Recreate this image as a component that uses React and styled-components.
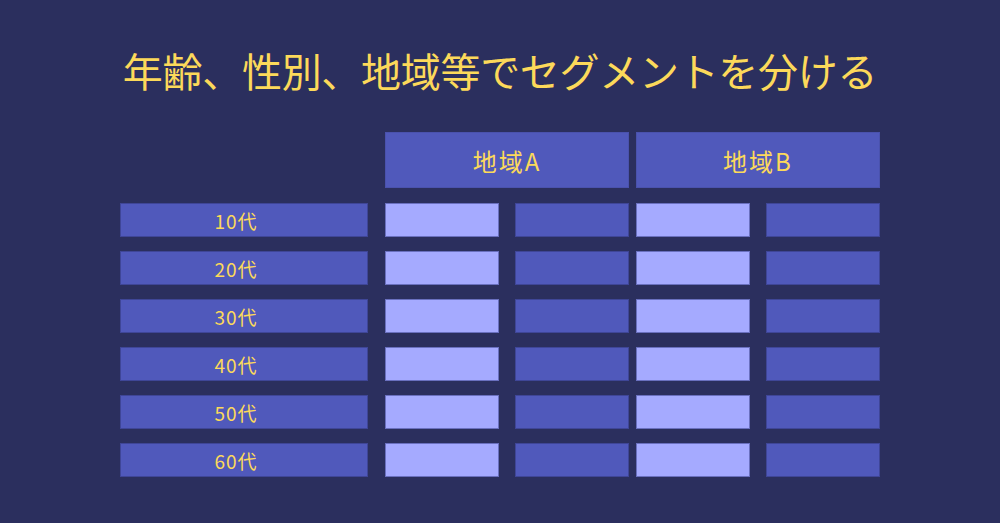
import React from 'react';
import styled, { createGlobalStyle } from 'styled-components';

const GlobalStyle = createGlobalStyle`
  html, body {
    margin: 0;
    padding: 0;
    background: #2b2f5e;
  }
  body {
    font-family: "Noto Sans CJK JP", "Noto Sans", sans-serif;
  }
`;

const ages = ['10代', '20代', '30代', '40代', '50代', '60代'];
const regions = ['地域A', '地域B'];

export default function App() {
  return (
    <>
      <GlobalStyle />
      <Page>
        <Title>年齢、性別、地域等でセグメントを分ける</Title>
        <Table>
          <Row $header>
            <Spacer />
            {regions.map(r => (
              <HeaderCell key={r}>{r}</HeaderCell>
            ))}
          </Row>
          {ages.map(age => (
            <Row key={age}>
              <Label>{age}</Label>
              {regions.map(r => (
                <Group key={r}>
                  <Cell $light />
                  <Cell />
                </Group>
              ))}
            </Row>
          ))}
        </Table>
      </Page>
    </>
  );
}

const Page = styled.div`
  width: 1000px;
  height: 523px;
  box-sizing: border-box;
  padding-top: 44px;
  display: flex;
  flex-direction: column;
  align-items: center;
  background: #2b2f5e;
`;

const Title = styled.h1`
  margin: 0;
  font-size: 40px;
  font-weight: 400;
  line-height: 52px;
  color: #fcd95a;
  letter-spacing: -0.3px;
`;

const Table = styled.div`
  margin-top: 36px;
  display: flex;
  flex-direction: column;
  gap: 14px;
`;

const Row = styled.div`
  display: flex;
  gap: 7px;
  margin-bottom: ${p => (p.$header ? '1px' : '0')};
`;

const Spacer = styled.div`
  width: 258px;
`;

const HeaderCell = styled.div`
  width: 244px;
  height: 56px;
  box-sizing: border-box;
  background: #5059bb;
  border: 1px solid #4a52ad;
  display: flex;
  align-items: center;
  justify-content: center;
  color: #fcd95a;
  font-size: 24px;
  letter-spacing: 2px;
`;

const Label = styled.div`
  width: 248px;
  height: 34px;
  margin-right: 10px;
  padding-right: 16px;
  box-sizing: border-box;
  background: #5059bb;
  border: 1px solid #3f4697;
  display: flex;
  align-items: center;
  justify-content: center;
  color: #fcd95a;
  font-size: 19px;
  letter-spacing: 1px;
`;

const Group = styled.div`
  width: 244px;
  display: flex;
  justify-content: space-between;
`;

const Cell = styled.div`
  width: 114px;
  height: 34px;
  box-sizing: border-box;
  background: ${p => (p.$light ? '#a5aaff' : '#5059bb')};
  border: 1px solid ${p => (p.$light ? '#6a70bf' : '#3f4697')};
`;
